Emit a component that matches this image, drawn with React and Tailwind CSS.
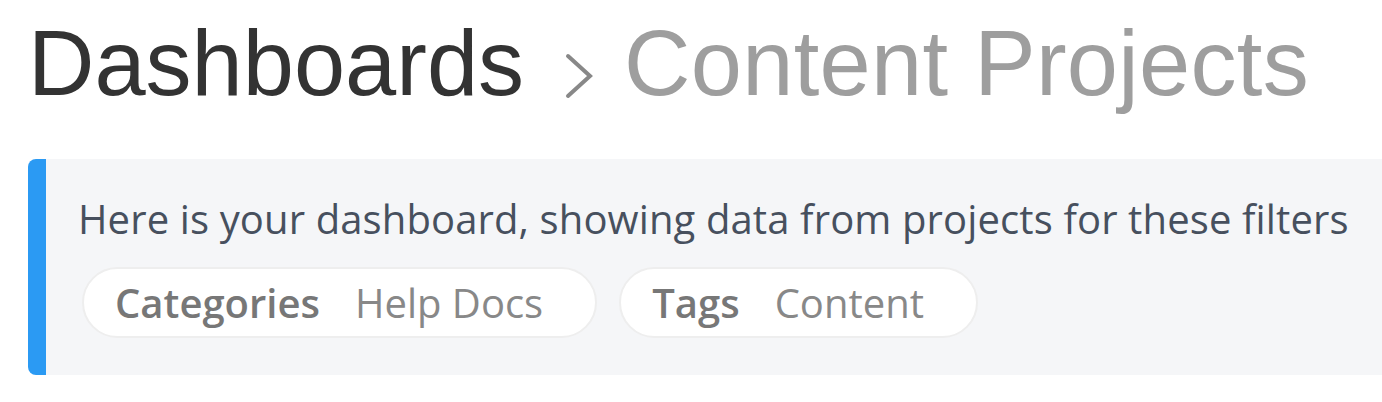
export default function App() {
  return (
    <div className="w-[1382px] h-[402px] bg-white overflow-hidden">
      <div className="flex items-start pl-[28px] pt-[17px] whitespace-nowrap">
        <span className="text-[92px] leading-none text-[#333333] font-['Liberation_Sans',Arial,sans-serif]">Dashboards</span>
        <svg className="ml-[41px] mr-[31px] mt-[36px]" width="28" height="46" viewBox="0 0 28 46">
          <path d="M3 3 L25 23 L3 43" fill="none" stroke="#888888" strokeWidth="4" strokeLinecap="round" strokeLinejoin="miter" />
        </svg>
        <span className="text-[92px] leading-none tracking-[0.3px] text-[#9e9e9e] font-['Liberation_Sans',Arial,sans-serif]">Content Projects</span>
      </div>
      <div className="mt-[50px] ml-[28px] h-[216px] bg-[#f5f6f8] border-l-[18px] border-[#2b9af3] rounded-l-[8px] pl-[32px] pt-[36px] font-['Open_Sans',sans-serif]">
        <p className="text-[40px] leading-[48px] tracking-[0.12px] text-[#47505e] whitespace-nowrap">
          Here is your dashboard, showing data from projects for these filters
        </p>
        <div className="flex gap-[22px] mt-[24px] ml-[4px]">
          <div className="flex items-center h-[71px] bg-white border-2 border-[#eeeeee] rounded-full pl-[31px] pr-[52px] text-[40px] leading-[48px] whitespace-nowrap">
            <span className="font-semibold text-[#777777]">Categories</span>
            <span className="ml-[35px] text-[#888888]">Help Docs</span>
          </div>
          <div className="flex items-center h-[71px] bg-white border-2 border-[#eeeeee] rounded-full pl-[31px] pr-[52px] text-[40px] leading-[48px] whitespace-nowrap">
            <span className="font-semibold text-[#777777]">Tags</span>
            <span className="ml-[35px] text-[#888888]">Content</span>
          </div>
        </div>
      </div>
    </div>
  );
}
